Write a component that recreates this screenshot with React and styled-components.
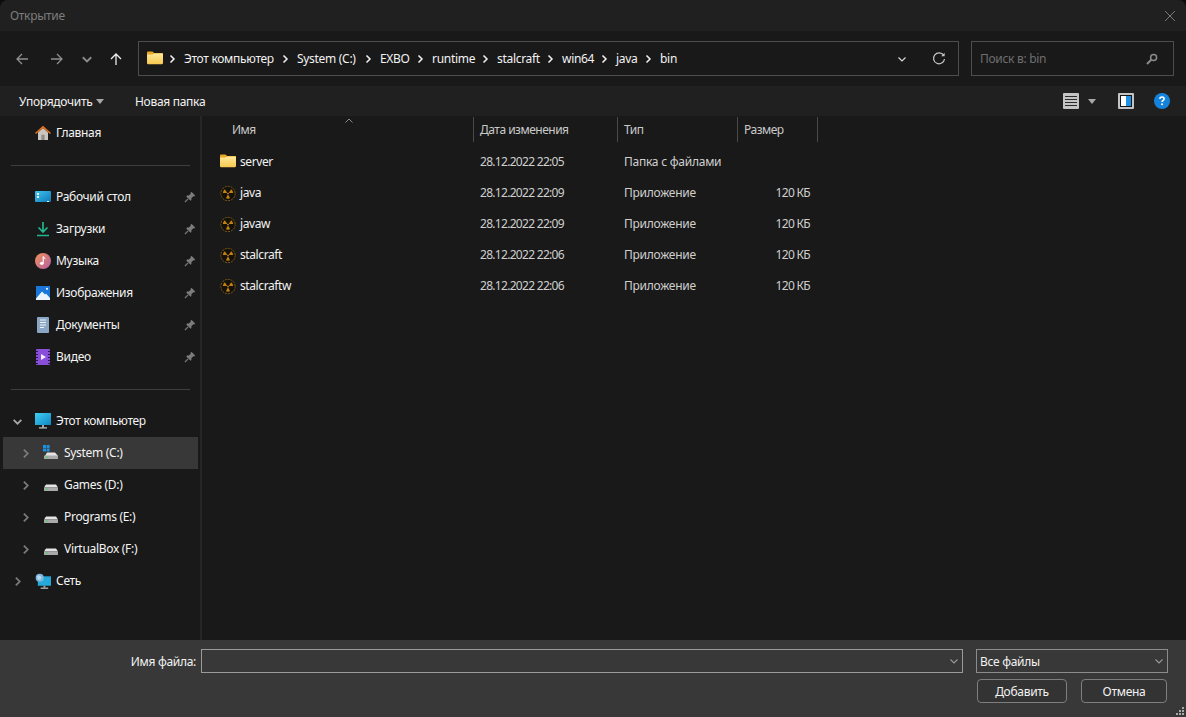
import React from 'react';
import styled, { createGlobalStyle } from 'styled-components';

const Global = createGlobalStyle`
  html, body { margin: 0; padding: 0; background: #0c0c0c; }
  body { width: 1186px; height: 717px; overflow: hidden; font-family: "Noto Sans", "Open Sans", sans-serif; font-size: 12px; letter-spacing: -0.3px; }
`;

const Dialog = styled.div`
  width: 1186px;
  height: 717px;
  display: flex;
  flex-direction: column;
  background: #191919;
  border-radius: 8px 8px 0 0;
  overflow: hidden;
  color: #f2f2f2;
  box-sizing: border-box;
`;

const TitleBar = styled.div`
  height: 31px;
  flex: none;
  display: flex;
  align-items: center;
  justify-content: space-between;
  padding: 0 10px;
  background: #202020;
  color: #7d7d7d;
`;

const CloseBtn = styled.div`
  width: 12px;
  height: 12px;
  display: flex;
`;

const NavBar = styled.div`
  height: 55px;
  flex: none;
  display: flex;
  align-items: center;
  background: #191919;
`;

const NavButton = styled.div`
  width: ${(p) => p.$w}px;
  margin-left: ${(p) => p.$ml || 0}px;
  display: flex;
  justify-content: center;
  flex: none;
`;

const PathBox = styled.div`
  width: 821px;
  height: 35px;
  margin-left: 15px;
  box-sizing: border-box;
  border: 1px solid #4d4d4d;
  display: flex;
  align-items: center;
  flex: none;
  padding-left: 8px;
`;

const PathFolder = styled.div`
  width: 20px;
  height: 16px;
  flex: none;
`;

const Crumb = styled.div`
  width: ${(p) => p.$w}px;
  flex: none;
  white-space: nowrap;
  color: #f2f2f2;
`;

const CrumbSep = styled.div`
  width: 17px;
  flex: none;
  display: flex;
`;

const PathTail = styled.div`
  margin-left: auto;
  display: flex;
  align-items: center;
`;

const SearchBox = styled.div`
  width: 203px;
  height: 35px;
  margin-left: 12px;
  box-sizing: border-box;
  border: 1px solid #4d4d4d;
  display: flex;
  align-items: center;
  justify-content: space-between;
  padding: 0 15px 0 8px;
  color: #6f6f6f;
  flex: none;
`;

const ToolBar = styled.div`
  height: 30px;
  flex: none;
  display: flex;
  align-items: center;
  background: #202020;
  padding-left: 19px;
`;

const ToolLabel = styled.span`
  width: ${(p) => p.$w}px;
  margin-left: ${(p) => p.$ml || 0}px;
  color: #f2f2f2;
  white-space: nowrap;
`;

const Caret = styled.div`
  width: 0;
  height: 0;
  margin-left: ${(p) => p.$ml}px;
  border-left: 4.5px solid transparent;
  border-right: 4.5px solid transparent;
  border-top: 5px solid #a8a8a8;
`;

const ToolRight = styled.div`
  margin-left: auto;
  display: flex;
  align-items: center;
  margin-right: 16px;
`;

const ToolIcon = styled.div`
  display: flex;
  margin-left: ${(p) => p.$ml || 0}px;
`;

const Body = styled.div`
  flex: 1;
  display: flex;
  min-height: 0;
`;

const Sidebar = styled.div`
  width: 200px;
  flex: none;
  padding-top: 1px;
  box-sizing: border-box;
`;

const Splitter = styled.div`
  width: 2px;
  flex: none;
  background: #262626;
`;

const NavRow = styled.div`
  height: 32px;
  width: 195px;
  margin-left: 3px;
  display: flex;
  align-items: center;
  background: ${(p) => (p.$selected ? '#383838' : 'transparent')};
  position: relative;
`;

const Expander = styled.div`
  width: 20px;
  flex: none;
  margin-left: ${(p) => (p.$child ? 12 : 4)}px;
  display: flex;
  justify-content: center;
`;

const NavIcon = styled.div`
  width: 16px;
  height: 16px;
  flex: none;
  margin-left: 8px;
  display: flex;
`;

const NavLabel = styled.span`
  margin-left: 5px;
  position: relative;
  top: -1px;
  white-space: nowrap;
  color: #f4f4f4;
`;

const Pin = styled.div`
  position: absolute;
  right: 2px;
  top: 10px;
  display: flex;
`;

const Rule = styled.div`
  height: 32px;
  display: flex;
  align-items: center;
  &::after {
    content: '';
    display: block;
    width: 179px;
    height: 1px;
    margin-left: 11px;
    background: #3f3f3f;
  }
`;

const Files = styled.div`
  flex: 1;
  position: relative;
`;

const HeaderRow = styled.div`
  height: 26px;
  margin-bottom: 4px;
  display: grid;
  grid-template-columns: 272px 144px 120px 80px;
  position: relative;
`;

const HeaderCell = styled.div`
  height: 25px;
  margin-top: 1px;
  box-sizing: border-box;
  border-right: 1px solid #4a4a4a;
  padding-left: ${(p) => p.$pl}px;
  display: flex;
  align-items: center;
  color: #c9c9c9;
  letter-spacing: -0.5px;
`;

const SortMark = styled.div`
  position: absolute;
  left: 142px;
  top: 0;
  display: flex;
`;

const FileRow = styled.div`
  height: 31px;
  display: grid;
  grid-template-columns: 271px 144px 120px 73px;
  align-items: center;
`;

const NameCell = styled.div`
  display: flex;
  align-items: center;
  padding-left: 18px;
  color: #f2f2f2;
  letter-spacing: -0.4px;
`;

const FileIcon = styled.div`
  width: 16px;
  height: 16px;
  margin-right: 4px;
  display: flex;
`;

const Cell = styled.div`
  padding-left: 7px;
  color: #cfcfcf;
  white-space: nowrap;
  text-align: ${(p) => (p.$right ? 'right' : 'left')};
  letter-spacing: ${(p) => (p.$num ? '-0.7px' : '-0.25px')};
`;

const Footer = styled.div`
  height: 77px;
  flex: none;
  background: #383838;
  position: relative;
  display: grid;
  grid-template-columns: 196px 762px 200px;
  grid-template-rows: 24px 24px;
  column-gap: 5px;
  row-gap: 6px;
  padding-top: 9px;
  box-sizing: border-box;
`;

const FieldLabel = styled.div`
  display: flex;
  align-items: center;
  justify-content: flex-end;
  color: #f2f2f2;
`;

const Field = styled.div`
  border: 1px solid ${(p) => (p.$dim ? '#8c8c8c' : '#9b9b9b')};
  box-sizing: border-box;
  display: flex;
  align-items: center;
  justify-content: space-between;
  padding: 0 3px;
  margin-left: ${(p) => p.$ml || 0}px;
  color: #f2f2f2;
`;

const Buttons = styled.div`
  grid-column: 3;
  grid-row: 2;
  display: flex;
  justify-content: space-between;
  margin-left: 9px;
  width: 190px;
`;

const Btn = styled.div`
  width: ${(p) => p.$w}px;
  height: 24px;
  box-sizing: border-box;
  border: 1px solid #7e7e7e;
  border-radius: 4px;
  background: #333;
  display: flex;
  align-items: center;
  justify-content: center;
  color: #f2f2f2;
`;

const Grip = styled.div`
  position: absolute;
  right: 1px;
  bottom: 1px;
  display: flex;
`;

const Chevron = ({ dir = 'right', color = '#8a8a8a', size = 10, sw = 1.6 }) => {
  const d = {
    right: 'M3.5 1.5 7 5 3.5 8.5',
    down: 'M1.5 3.5 5 7l3.5-3.5',
    up: 'M1.5 6.5 5 3l3.5 3.5',
  }[dir];
  return (
    <svg width={size} height={size} viewBox="0 0 10 10" fill="none">
      <path d={d} stroke={color} strokeWidth={sw} />
    </svg>
  );
};

const Arrow = ({ dir, color }) => {
  const d = {
    left: 'M13 7H2M7 2 2 7l5 5',
    right: 'M1 7h11M7 2l5 5-5 5',
    up: 'M7 13V2M2 7l5-5 5 5',
  }[dir];
  return (
    <svg width="14" height="14" viewBox="0 0 14 14" fill="none">
      <path d={d} stroke={color} strokeWidth="1.3" />
    </svg>
  );
};

const Folder = () => (
  <svg width="16" height="14" viewBox="0 0 16 14">
    <defs>
      <linearGradient id="fold" x1="0" y1="0" x2="0" y2="1">
        <stop offset="0" stopColor="#ffe89a" />
        <stop offset="1" stopColor="#f8c94e" />
      </linearGradient>
    </defs>
    <path d="M0 1.5C0 .8.5.4 1 .4h4.4L7.2 2H15c.6 0 1 .4 1 1v2H0z" fill="#e9a825" />
    <path d="M0 3.6h5.6L7 2.6h8c.6 0 1 .4 1 1V12c0 .7-.5 1.2-1 1.2H1c-.6 0-1-.5-1-1.2z" fill="url(#fold)" />
  </svg>
);

const Blade = ({ angle }) => (
  <path d="M8.5 7.6 6.3 3.4a5.6 5.6 0 0 1 4.4 0z" fill="#c4810f" transform={`rotate(${angle} 8.5 8.5)`} />
);

const Radiation = () => (
  <svg width="17" height="17" viewBox="0 0 17 17">
    <circle cx="8.5" cy="8.5" r="7.6" fill="#14110b" stroke="#80601a" strokeWidth="1" strokeDasharray="2.2 1" />
    <Blade angle={60} />
    <Blade angle={-60} />
    <Blade angle={180} />
    <circle cx="8.5" cy="8.5" r="0.9" fill="#d08c14" />
  </svg>
);

const PinIcon = () => (
  <svg width="12" height="12" viewBox="0 0 12 12">
    <path d="M7.4.8 11.2 4.6 10.2 5.4 9.4 5.2 7.4 7.2 7.4 9 6.6 9.8 2.2 5.4 3 4.6 4.8 4.6 6.8 2.6 6.6 1.8z" fill="#7c7c7c" />
    <path d="M4 7.9.9 11.1" stroke="#7c7c7c" strokeWidth="1.3" />
  </svg>
);

const Home = () => (
  <svg width="16" height="16" viewBox="0 0 16 16">
    <path d="M3 7.5V15h10V7.5L8 3z" fill="#c9c5c1" />
    <rect x="6.4" y="9.8" width="3.2" height="5.2" fill="#8d8a87" />
    <path d="M0 8 8 .8 16 8l-1 1-7-6-7 6z" fill="#e5721c" />
  </svg>
);

const Desktop = () => (
  <svg width="16" height="16" viewBox="0 0 16 16">
    <defs>
      <linearGradient id="desk" x1="0" y1="0" x2="1" y2="1">
        <stop offset="0" stopColor="#3fc4ee" />
        <stop offset="1" stopColor="#0f79b8" />
      </linearGradient>
    </defs>
    <rect y="2" width="16" height="11" rx="1" fill="url(#desk)" />
    <rect x="2" y="4" width="2" height="2" fill="#e8f6fc" />
    <rect x="2" y="7" width="2" height="2" fill="#e8f6fc" />
    <rect x="12" y="12" width="2" height="1" fill="#dff" />
  </svg>
);

const Download = () => (
  <svg width="16" height="16" viewBox="0 0 16 16" fill="none">
    <path d="M8 1v9.5M3.5 6.5 8 11l4.5-4.5" stroke="#22b58f" strokeWidth="1.7" />
    <path d="M2 14.5h12" stroke="#22b58f" strokeWidth="1.5" />
  </svg>
);

const Music = () => (
  <svg width="16" height="16" viewBox="0 0 16 16">
    <defs>
      <linearGradient id="mus" x1="0" y1="0" x2="1" y2="1">
        <stop offset="0" stopColor="#f0905a" />
        <stop offset="1" stopColor="#b45fa4" />
      </linearGradient>
    </defs>
    <circle cx="8" cy="8" r="8" fill="url(#mus)" />
    <path d="M8.2 3.5v6.2" stroke="#fff" strokeWidth="1.2" />
    <path d="M8.4 3.5c.4 1.3 1.6 1.4 2 2.6" stroke="#fff" strokeWidth="1" fill="none" />
    <ellipse cx="6.8" cy="10.3" rx="1.9" ry="1.6" fill="#fff" />
  </svg>
);

const Pictures = () => (
  <svg width="16" height="16" viewBox="0 0 16 16">
    <rect x="1" y="1" width="14" height="14" fill="#1877d8" />
    <path d="M1 13.5 7 6.5l3 3 1-1 4 4.5V15H1z" fill="#e9f4fd" />
    <circle cx="12" cy="3.8" r="1.1" fill="#e9f4fd" />
  </svg>
);

const Docs = () => (
  <svg width="16" height="16" viewBox="0 0 16 16">
    <rect x="2" y="0" width="12" height="16" rx="1" fill="#8aa6c4" />
    <path d="M5 3h6M5 5.5h6M5 8h6M5 10.5h4" stroke="#eef3f8" strokeWidth="1.1" />
  </svg>
);

const Video = () => (
  <svg width="16" height="16" viewBox="0 0 16 16">
    <rect x="1" y="0" width="14" height="16" rx="1" fill="#8a4fd8" />
    <path d="M1 2.5h2M1 5.5h2M1 8.5h2M1 11.5h2M1 14.5h2M13 2.5h2M13 5.5h2M13 8.5h2M13 11.5h2M13 14.5h2" stroke="#2d1352" strokeWidth="1" />
    <path d="M6 5v6l5-3z" fill="#f5edff" />
  </svg>
);

const Computer = () => (
  <svg width="16" height="16" viewBox="0 0 16 16">
    <defs>
      <linearGradient id="comp" x1="0" y1="0" x2="1" y2="1">
        <stop offset="0" stopColor="#3fd0f2" />
        <stop offset="1" stopColor="#1185c4" />
      </linearGradient>
    </defs>
    <rect y="0" width="16" height="12" fill="url(#comp)" />
    <rect x="7" y="12" width="2" height="2.5" fill="#9aa4ab" />
    <rect x="4" y="14.3" width="8" height="1.2" fill="#c8ced2" />
  </svg>
);

const Drive = ({ system }) => (
  <svg width="16" height="16" viewBox="0 0 16 16">
    {system && <path d="M0 0h3v3H0zM3.6 0h3v3h-3zM0 3.6h3v3H0zM3.6 3.6h3v3h-3z" fill="#1f8fe0" />}
    <path d={system ? 'M2 11 4 7.5h8l3 3.5z' : 'M1 10.5 3 7.6h10l2 2.9z'} fill="#e4e4e4" />
    <rect x="1" y="10.5" width="14" height="3.5" rx=".6" fill="#a9a9a9" />
    <rect x="3" y="11.6" width="2" height="1" fill="#39d46a" />
  </svg>
);

const Network = () => (
  <svg width="17" height="17" viewBox="0 0 17 17">
    <rect x="3" y="3" width="14" height="10" fill="#23a9dc" />
    <rect x="9" y="13" width="2" height="2" fill="#9aa4ab" />
    <rect x="6" y="15" width="8" height="1.2" fill="#c8ced2" />
    <circle cx="5" cy="4.5" r="4.3" fill="#7fb7dc" />
    <path d="M2 3c1.5-1.5 3-1 4 0s1 2 0 3-2 1-3 0" fill="#b7d9ee" />
  </svg>
);

const crumbs = [
  ['Этот компьютер', 96],
  ['System (C:)', 66],
  ['EXBO', 35],
  ['runtime', 48],
  ['stalcraft', 48],
  ['win64', 37],
  ['java', 27],
  ['bin', 30],
];

const pinned = [
  ['Рабочий стол', <Desktop />],
  ['Загрузки', <Download />],
  ['Музыка', <Music />],
  ['Изображения', <Pictures />],
  ['Документы', <Docs />],
  ['Видео', <Video />],
];

const drives = [
  ['System (C:)', true],
  ['Games (D:)'],
  ['Programs (E:)'],
  ['VirtualBox (F:)'],
];

const files = [
  ['java', '28.12.2022 22:09'],
  ['javaw', '28.12.2022 22:09'],
  ['stalcraft', '28.12.2022 22:06'],
  ['stalcraftw', '28.12.2022 22:06'],
];

export default function App() {
  return (
    <Dialog>
      <Global />
      <TitleBar>
        <span>Открытие</span>
        <CloseBtn>
          <svg width="12" height="12" viewBox="0 0 12 12" fill="none">
            <path d="M1 1l10 10M11 1 1 11" stroke="#7a7a7a" strokeWidth="1" />
          </svg>
        </CloseBtn>
      </TitleBar>
      <NavBar>
        <NavButton $w={14} $ml={15}><Arrow dir="left" color="#8f8f8f" /></NavButton>
        <NavButton $w={14} $ml={21}><Arrow dir="right" color="#8f8f8f" /></NavButton>
        <NavButton $w={12} $ml={17}><Chevron dir="down" color="#8a8a8a" size={12} /></NavButton>
        <NavButton $w={14} $ml={16}><Arrow dir="up" color="#ededed" /></NavButton>
        <PathBox>
          <PathFolder><Folder /></PathFolder>
          {crumbs.map(([label, w]) => (
            <React.Fragment key={label}>
              <CrumbSep><Chevron color="#f2f2f2" size={10} sw={1.5} /></CrumbSep>
              <Crumb $w={w}>{label}</Crumb>
            </React.Fragment>
          ))}
          <PathTail>
            <NavButton $w={10}><Chevron dir="down" color="#d8d8d8" size={10} sw={1.2} /></NavButton>
            <NavButton $w={14} $ml={25}>
              <svg width="14" height="14" viewBox="0 0 14 14" fill="none">
                <path d="M11.6 3.2A5.5 5.5 0 1 0 12.5 7" stroke="#c8c8c8" strokeWidth="1.2" />
                <path d="M12.6.8v3.4H9.2z" fill="#c8c8c8" />
              </svg>
            </NavButton>
            <NavButton $w={12} />
          </PathTail>
        </PathBox>
        <SearchBox>
          <span>Поиск в: bin</span>
          <svg width="12" height="12" viewBox="0 0 12 12" fill="none">
            <circle cx="7.6" cy="4.4" r="3" stroke="#8a8a8a" strokeWidth="1.5" />
            <path d="M5.2 6.8 1 11" stroke="#8a8a8a" strokeWidth="2" />
          </svg>
        </SearchBox>
      </NavBar>
      <ToolBar>
        <ToolLabel $w={72}>Упорядочить</ToolLabel>
        <Caret $ml={5} />
        <ToolLabel $ml={31} $w={70}>Новая папка</ToolLabel>
        <ToolRight>
          <ToolIcon>
            <svg width="16" height="16" viewBox="0 0 16 16">
              <rect width="16" height="16" rx="1" fill="#c4c4c4" />
              <path d="M2 3.5h12M2 6.5h12M2 9.5h12M2 12.5h12" stroke="#2a2a2a" strokeWidth="1" />
            </svg>
          </ToolIcon>
          <Caret $ml={9} />
          <ToolIcon $ml={22}>
            <svg width="16" height="16" viewBox="0 0 16 16">
              <rect width="16" height="16" rx="1" fill="#c4c4c4" />
              <rect x="2" y="2" width="12" height="12" fill="#161616" />
              <rect x="3" y="3" width="5" height="10" fill="#fff" />
              <rect x="8" y="3" width="5" height="10" fill="#1e90e6" />
            </svg>
          </ToolIcon>
          <ToolIcon $ml={20}>
            <svg width="16" height="16" viewBox="0 0 16 16">
              <circle cx="8" cy="8" r="8" fill="#1583dc" />
              <path d="M5.9 6c0-1.3 1-2 2.1-2s2.1.7 2.1 1.9c0 1.5-2 1.6-2 3.2" stroke="#fff" strokeWidth="1.6" fill="none" />
              <rect x="7.2" y="10.4" width="1.7" height="1.7" fill="#fff" />
            </svg>
          </ToolIcon>
        </ToolRight>
      </ToolBar>
      <Body>
        <Sidebar>
          <NavRow>
            <Expander />
            <NavIcon><Home /></NavIcon>
            <NavLabel>Главная</NavLabel>
          </NavRow>
          <Rule />
          {pinned.map(([label, icon]) => (
            <NavRow key={label}>
              <Expander />
              <NavIcon>{icon}</NavIcon>
              <NavLabel>{label}</NavLabel>
              <Pin><PinIcon /></Pin>
            </NavRow>
          ))}
          <Rule />
          <NavRow>
            <Expander><Chevron dir="down" color="#a8a8a8" size={11} /></Expander>
            <NavIcon><Computer /></NavIcon>
            <NavLabel>Этот компьютер</NavLabel>
          </NavRow>
          {drives.map(([label, system]) => (
            <NavRow key={label} $selected={system}>
              <Expander $child><Chevron color="#7c7c7c" size={11} /></Expander>
              <NavIcon><Drive system={system} /></NavIcon>
              <NavLabel>{label}</NavLabel>
            </NavRow>
          ))}
          <NavRow>
            <Expander><Chevron color="#7c7c7c" size={11} /></Expander>
            <NavIcon><Network /></NavIcon>
            <NavLabel>Сеть</NavLabel>
          </NavRow>
        </Sidebar>
        <Splitter />
        <Files>
          <HeaderRow>
            <HeaderCell $pl={30}>Имя</HeaderCell>
            <HeaderCell $pl={6}>Дата изменения</HeaderCell>
            <HeaderCell $pl={6}>Тип</HeaderCell>
            <HeaderCell $pl={6}>Размер</HeaderCell>
            <SortMark><Chevron dir="up" color="#8c8c8c" size={10} sw={1} /></SortMark>
          </HeaderRow>
          <FileRow>
            <NameCell><FileIcon><Folder /></FileIcon>server</NameCell>
            <Cell $num>28.12.2022 22:05</Cell>
            <Cell>Папка с файлами</Cell>
            <Cell $right />
          </FileRow>
          {files.map(([name, date]) => (
            <FileRow key={name}>
              <NameCell><FileIcon><Radiation /></FileIcon>{name}</NameCell>
              <Cell $num>{date}</Cell>
              <Cell>Приложение</Cell>
              <Cell $right $num>120 КБ</Cell>
            </FileRow>
          ))}
        </Files>
      </Body>
      <Footer>
        <FieldLabel>Имя файла:</FieldLabel>
        <Field>
          <span />
          <Chevron dir="down" color="#9a9a9a" size={10} sw={1.1} />
        </Field>
        <Field $dim $ml={8}>
          <span>Все файлы</span>
          <Chevron dir="down" color="#9a9a9a" size={10} sw={1.1} />
        </Field>
        <Buttons>
          <Btn $w={90}>Добавить</Btn>
          <Btn $w={86}>Отмена</Btn>
        </Buttons>
        <Grip>
          <svg width="10" height="10" viewBox="0 0 10 10">
            <path d="M7 1h2v2H7zM4 4h2v2H4zM7 4h2v2H7zM1 7h2v2H1zM4 7h2v2H4zM7 7h2v2H7z" fill="#a8a8a8" />
          </svg>
        </Grip>
      </Footer>
    </Dialog>
  );
}
